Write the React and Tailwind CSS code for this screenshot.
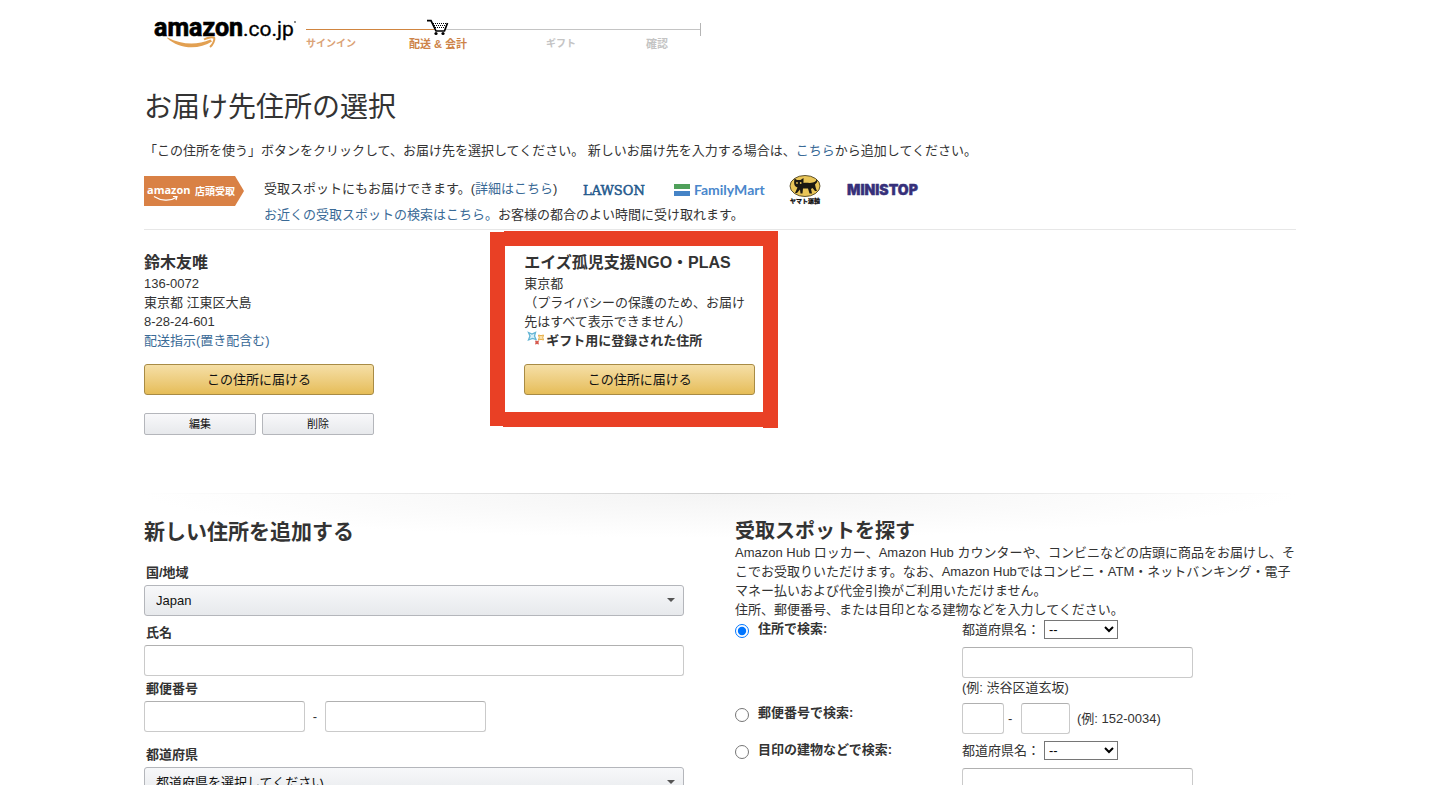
import React, { useState } from "react";

const link = "text-[#3a6a96] hover:underline";
const textInput =
  "h-[31px] rounded-[3px] border border-[#cacaca] border-t-[#b0b0b0] bg-white px-2";
const goldButton =
  "block h-[31px] w-full rounded-[3px] border border-[#a88b45] bg-linear-to-b from-[#f5dfa6] to-[#e6bd57] text-[13px] text-[#111]";
const greyButton =
  "h-[22px] flex-1 rounded-[2px] border border-[#b4b6bb] bg-linear-to-b from-[#f8f8fa] to-[#e7e9ec] text-[11px] leading-none text-[#111]";

const AmazonLogo = () => (
  <svg width="144" height="36" viewBox="0 0 144 36" role="img" aria-label="amazon.co.jp">
    <text x="1" y="22" fontFamily="Roboto, sans-serif" fontSize="25" fontWeight="700" fill="#000" stroke="#000" strokeWidth="0.700">
      amazon
    </text>
    <text x="90" y="22" fontFamily="Roboto, sans-serif" fontSize="21" fill="#000" stroke="#000" strokeWidth="0.300">
      .co.jp
    </text>
    <path d="M14 24C26 35.500 46 36 59 27.500L57.500 25.500C44 31.500 29 31 14.500 23.500Z" fill="#e2a052" />
    <path d="M51 25.500C55 23 60 23 61.300 24C61.800 26 60 30.500 57 33" fill="none" stroke="#e2a052" strokeWidth="2" />
    <circle cx="142" cy="8" r="0.900" fill="#555" />
  </svg>
);

const ProgressLine = () => (
  <svg width="395" height="18" viewBox="0 0 395 18" aria-hidden="true">
    <rect x="0" y="10" width="128" height="1" fill="#d08540" />
    <rect x="128" y="10" width="266" height="1" fill="#c4c4c4" />
    <path d="M394.500 4V17" stroke="#b5b5b5" />
    <path d="M127 3H141L138 11H129.500Z" fill="#fff" />
    <path d="M121 1.700H125L130 12H138.500L141.500 4" fill="none" stroke="#000" strokeWidth="1.700" />
    <path d="M127 4.500H140M128 6.500H139.500M129 8.500H139" stroke="#000" strokeWidth="1" strokeDasharray="1 1" />
    <circle cx="130" cy="14.500" r="1.600" />
    <circle cx="137" cy="14.500" r="1.600" />
  </svg>
);

const PickupBadge = () => (
  <svg width="100" height="30" viewBox="0 0 100 30" role="img" aria-label="amazon 店頭受取">
    <path d="M0 0H91L100 15L91 30H0Z" fill="#d98145" />
    <text x="3" y="18" fontFamily="'Open Sans', sans-serif" fontSize="11" fontWeight="700" fill="#fff">
      amazon
    </text>
    <text x="51" y="19" fontFamily="'Noto Sans CJK JP', sans-serif" fontSize="10" fontWeight="700" fill="#fff">
      店頭受取
    </text>
    <path d="M10 20.500C17 25 26 25.500 32 21.500M29 20.500H33L32 24" fill="none" stroke="#fff" strokeWidth="1.200" />
  </svg>
);

const LawsonLogo = () => (
  <svg width="65" height="14" viewBox="0 0 65 14" role="img" aria-label="LAWSON">
    <text x="0" y="12" fontFamily="'DejaVu Serif', serif" fontSize="13" fill="#24598c" stroke="#24598c" strokeWidth="0.500">
      LAWSON
    </text>
  </svg>
);

const FamilyMartLogo = () => (
  <svg width="92" height="18" viewBox="0 0 92 18" role="img" aria-label="FamilyMart">
    <rect x="0" y="3" width="16" height="5" fill="#4fa05a" />
    <rect x="0" y="10" width="16" height="5" fill="#4583c6" />
    <text x="20" y="14" fontFamily="Lato, sans-serif" fontSize="14" fontWeight="700" fill="#4a87cc">
      FamilyMart
    </text>
  </svg>
);

const YamatoLogo = () => (
  <svg width="34" height="30" viewBox="0 0 34 30" role="img" aria-label="ヤマト運輸">
    <ellipse cx="17" cy="11" rx="15" ry="10.500" fill="#e9c558" stroke="#4d4325" strokeWidth="0.900" />
    <path d="M6.500 3.500L9 5H12.500L15.500 3L15.500 8C19 7.500 22 8.500 25 7.500C28 6.500 29 5 28 4.500C30 4.500 30 7 27 9.500C27.500 12 28 14 29 16H27L24.500 13L23 14L24 18.500H21.500L20 13.500L15 13.500L14.500 18.500H12.500L12 14.500L9 18H7L9.500 12.500C6.500 11.500 5.500 9.500 6.500 3.500Z" fill="#1b1812" />
    <circle cx="9" cy="8" r="0.900" fill="#e9c558" />
    <circle cx="12.700" cy="8" r="0.900" fill="#e9c558" />
    <text x="2" y="28" fontFamily="'Noto Sans CJK JP', sans-serif" fontSize="6" fontWeight="900" fill="#111" stroke="#111" strokeWidth="0.200">
      ヤマト運輸
    </text>
  </svg>
);

const MinistopLogo = () => (
  <svg width="80" height="20" viewBox="0 0 80 20" role="img" aria-label="MINISTOP">
    <text x="1" y="15" fontFamily="Inter, sans-serif" fontSize="14" fontWeight="900" fill="#36307a" stroke="#36307a" strokeWidth="0.400" strokeLinejoin="round">
      MINISTOP
    </text>
  </svg>
);

const Sparkles = () => (
  <svg className="shrink-0" width="18" height="16" viewBox="0 0 18 16" aria-hidden="true">
    <path d="M2.500 1.500L6 3L9.500 1.500L8.500 5L10 8.500L6.500 7.500L2.500 9L4 5Z" fill="#d9f0f8" stroke="#62b4d4" strokeWidth="1.300" />
    <path d="M12.500 4L15 4.700L17.500 4L16.800 6.500L17.500 9L15 8.300L12.500 9L13.200 6.500Z" fill="#fbe3ae" stroke="#e6ad45" />
    <path d="M9 9.500L11 10L13 9.500L12.500 11.500L13 13.500L11 13L9 13.500L9.500 11.500Z" fill="#d65a4f" />
  </svg>
);

// Red marker frame drawn over the recommended address
const MarkerFrame = () => (
  <svg className="pointer-events-none absolute -left-[34px] -top-[23px] h-[198px] w-[288px]" viewBox="0 0 288 198" preserveAspectRatio="none" aria-hidden="true">
    <path fillRule="evenodd" d="M0 2H14V1H288V198H273V197H13V196H0ZM15 16V182H273V16Z" fill="#e94025" />
  </svg>
);

const Field = ({ id, label, children }) => (
  <div>
    <label htmlFor={id} className="ml-0.5 block h-[22px] font-bold leading-[19px]">
      {label}
    </label>
    {children}
  </div>
);

const BigSelect = ({ id, children }) => (
  <div className="relative">
    <select
      id={id}
      className="h-[31px] w-full appearance-none rounded-[3px] border border-[#b4b6bb] bg-linear-to-b from-[#f7f8fa] to-[#e7e9ec] pl-[11px] text-[13px] text-[#111]"
    >
      {children}
    </select>
    <span className="pointer-events-none absolute right-[9px] top-[13px] border-x-4 border-t-4 border-x-transparent border-t-[#555]" />
  </div>
);

const PrefectureSelect = ({ id }) => (
  <div className="flex h-5 items-center gap-1">
    <label htmlFor={id}>都道府県名：</label>
    <select id={id} className="h-[19px] w-[74px] rounded-none border border-[#767676] bg-white text-[13px] leading-none text-black">
      <option>--</option>
    </select>
  </div>
);

const SearchRow = ({ id, label, mode, setMode, children }) => (
  <div className="grid grid-cols-[23px_204px_1fr]">
    <input
      type="radio"
      id={id}
      name="search"
      className="mt-[5px] size-3.5"
      checked={mode === id}
      onChange={() => setMode(id)}
    />
    <label htmlFor={id} className="font-bold">
      {label}
    </label>
    <div>{children}</div>
  </div>
);

const App = () => {
  const [mode, setMode] = useState("by-address");

  return (
    <div
      lang="ja"
      className="mx-auto w-4/5 bg-white font-['Liberation_Sans','Noto_Sans_CJK_JP',sans-serif] text-[13px] leading-[19px] text-[#333]"
    >
      <header className="flex pl-[9px] pt-[14px]">
        <AmazonLogo />
        <div className="ml-[9px] mt-[5px]">
          <ProgressLine />
          <ol className="grid grid-cols-[103px_137px_100px_1fr] text-[11px] font-bold leading-[14px] text-[#c4c4c4]">
            <li className="text-[10px] text-[#dba377]">サインイン</li>
            <li className="text-[#cd8347]">配送 &amp; 会計</li>
            <li className="text-[10px]">ギフト</li>
            <li>確認</li>
          </ol>
        </div>
      </header>

      <main>
        <h1 className="mt-[39px] text-[28px] leading-9">お届け先住所の選択</h1>
        <p className="mt-[15px]">
          「この住所を使う」ボタンをクリックして、お届け先を選択してください。 新しいお届け先を入力する場合は、
          <a href="#new-address" className={link}>こちら</a>
          から追加してください。
        </p>

        <section className="mt-4 flex gap-5 border-b border-[#e7e7e7] pb-px">
          <PickupBadge />
          <div className="leading-[26px]">
            <div className="flex h-[26px] items-center">
              <p>
                受取スポットにもお届けできます。(
                <a href="#pickup" className={link}>詳細はこちら</a>)
              </p>
              <div className="ml-[26px] flex items-center pt-0.5">
                <LawsonLogo />
                <div className="ml-[26px]"><FamilyMartLogo /></div>
                <div className="ml-[22px]"><YamatoLogo /></div>
                <div className="ml-6"><MinistopLogo /></div>
              </div>
            </div>
            <p>
              <a href="#pickup-search" className={link}>お近くの受取スポットの検索はこちら。</a>
              お客様の都合のよい時間に受け取れます。
            </p>
          </div>
        </section>

        <section className="mt-[23px] flex">
          <div className="w-[33%]">
            <div className="w-[230px]">
              <h2 className="mb-px text-base leading-5 font-bold">鈴木友唯</h2>
              <p>136-0072</p>
              <p>東京都 江東区大島</p>
              <p>8-28-24-601</p>
              <a href="#delivery" className={link}>配送指示(置き配含む)</a>
              <button type="button" className={`${goldButton} mt-3.5`}>この住所に届ける</button>
              <div className="mt-[18px] flex gap-1.5">
                <button type="button" className={greyButton}>編集</button>
                <button type="button" className={greyButton}>削除</button>
              </div>
            </div>
          </div>
          <div className="w-[33%]">
            <div className="relative w-[231px]">
              <MarkerFrame />
              <h2 className="mb-px text-base leading-5 font-bold">エイズ孤児支援NGO・PLAS</h2>
              <p>東京都</p>
              <p>
                （プライバシーの保護のため、お届け
                <br />
                先はすべて表示できません）
              </p>
              <p className="flex h-[19px] gap-0.5 pl-0.5 font-bold">
                <Sparkles />
                ギフト用に登録された住所
              </p>
              <button type="button" className={`${goldButton} mt-3.5`}>この住所に届ける</button>
            </div>
          </div>
        </section>

        <div className="mt-[58px] h-px bg-linear-to-r from-transparent via-[#d0d0d0] to-transparent" />
        <div className="grid grid-cols-[540fr_561fr] gap-[51px] bg-[radial-gradient(ellipse_50%_44px_at_top,#f4f4f4,#ffffff)]">
          <form id="new-address">
            <h2 className="mt-6 text-[21px] leading-7 font-bold">新しい住所を追加する</h2>
            <div className="mt-[17px]">
              <Field id="country" label="国/地域">
                <BigSelect id="country">
                  <option>Japan</option>
                </BigSelect>
              </Field>
            </div>
            <div className="mt-[7px]">
              <Field id="name" label="氏名">
                <input id="name" type="text" className={`${textInput} block w-full`} />
              </Field>
            </div>
            <div className="mt-[3px]">
              <Field id="zip" label="郵便番号">
                <div className="flex items-center">
                  <input id="zip" type="text" className={`${textInput} w-[161px]`} />
                  <span className="w-5 text-center">-</span>
                  <input aria-label="郵便番号 下4桁" type="text" className={`${textInput} w-[161px]`} />
                </div>
              </Field>
            </div>
            <div className="mt-[13px]">
              <Field id="prefecture" label="都道府県">
                <BigSelect id="prefecture">
                  <option>都道府県を選択してください</option>
                </BigSelect>
              </Field>
            </div>
          </form>

          <form>
            <h2 className="mt-[25px] text-xl leading-6 font-bold">受取スポットを探す</h2>
            <p>
              Amazon Hub ロッカー、Amazon Hub カウンターや、コンビニなどの店頭に商品をお届けし、そこでお受取りいただけます。なお、Amazon Hubではコンビニ・ATM・ネットバンキング・電子マネー払いおよび代金引換がご利用いただけません。
            </p>
            <p>住所、郵便番号、または目印となる建物などを入力してください。</p>
            <SearchRow id="by-address" label="住所で検索:" mode={mode} setMode={setMode}>
              <PrefectureSelect id="address-prefecture" />
              <input aria-label="住所" type="text" className={`${textInput} mt-2 block w-[231px]`} />
              <p>(例: 渋谷区道玄坂)</p>
            </SearchRow>
            <div className="mt-1.5">
              <SearchRow id="by-zip" label="郵便番号で検索:" mode={mode} setMode={setMode}>
                <div className="flex items-center">
                  <input aria-label="郵便番号 上3桁" type="text" className={`${textInput} w-[42px]`} />
                  <span className="w-[17px] pl-1">-</span>
                  <input aria-label="郵便番号 下4桁" type="text" className={`${textInput} w-[49px]`} />
                  <span className="ml-[7px]">(例: 152-0034)</span>
                </div>
              </SearchRow>
            </div>
            <div className="mt-1.5">
              <SearchRow id="by-landmark" label="目印の建物などで検索:" mode={mode} setMode={setMode}>
                <PrefectureSelect id="landmark-prefecture" />
                <input aria-label="目印の建物" type="text" className={`${textInput} mt-2 block w-[231px]`} />
              </SearchRow>
            </div>
          </form>
        </div>
      </main>
    </div>
  );
};

export default App;
